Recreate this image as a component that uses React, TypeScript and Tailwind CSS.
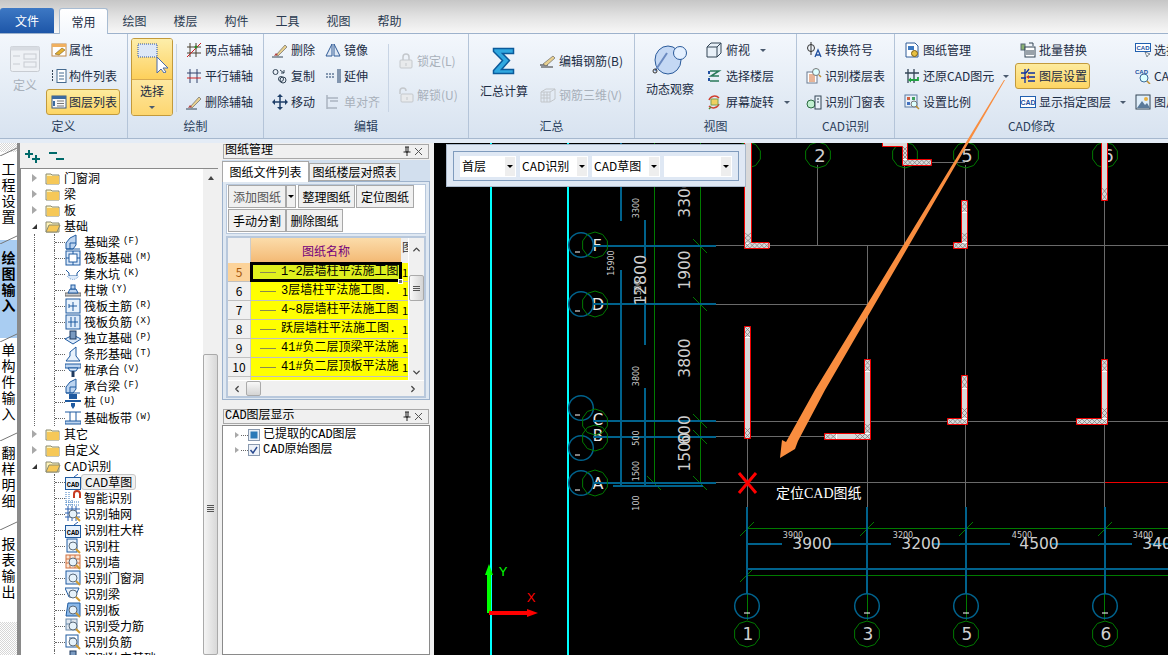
import React from "react";
import { ChevronUp, ChevronDown, ChevronLeft, ChevronRight } from "lucide-react";

const CJK = { fontFamily: '"Noto Sans CJK SC", sans-serif' };
const MONO = { fontFamily: '"Liberation Mono", "Noto Sans CJK SC", monospace' };

const S = ({ children, w = 16, h = 16, vb = "0 0 16 16", o = 1 }: { children: React.ReactNode; w?: number; h?: number; vb?: string; o?: number }) => (
  <svg width={w} height={h} viewBox={vb} className="shrink-0" style={{ opacity: o }} fill="none">
    {children}
  </svg>
);

const icons: Record<string, React.ReactNode> = {
  attr: <><rect x="1" y="2" width="14" height="12" fill="#fff" stroke="#c08a4a" /><rect x="1" y="2" width="14" height="3" fill="#f0b060" /><path d="M4 12l7-6 3 2-6 5z" fill="#e3b030" stroke="#7a5a20" strokeWidth=".6" /></>,
  list: <><path d="M1 3h2M1 6h2M1 9h2M1 12h2" stroke="#345" strokeDasharray="1 1" strokeWidth="2" /><rect x="6" y="1.500" width="9" height="13" fill="#fff" stroke="#456a90" /><path d="M8 5h5M8 8h5M8 11h5" stroke="#456a90" /></>,
  layer: <><rect x="1" y="2" width="14" height="12" fill="#f8f8f8" stroke="#3c5a80" /><rect x="1" y="2" width="14" height="3" fill="#3c6aa0" /><path d="M6 7h7M6 9.500h7M6 12h7" stroke="#777" /><path d="M3 7v5" stroke="#3c6aa0" strokeWidth="2" /></>,
  two: <><path d="M4 1v14M10 1v14M1 5h14M1 11h14" stroke="#4a4030" /><path d="M1 15L15 1" stroke="#d02020" /><circle cx="10" cy="5" r="1.500" fill="#2a8a2a" /></>,
  par: <><path d="M4 1v14M11 1v14" stroke="#30406a" /><path d="M1 5h14" stroke="#30406a" /><path d="M1 10h14" stroke="#d02020" /></>,
  erase: <><path d="M0 15h11" stroke="#345" /><path d="M4 13L13 3l2 2-9 9z" fill="#e8d090" stroke="#555" strokeWidth=".6" /><path d="M2 14l2-3 2 2z" fill="#b04040" /></>,
  copy: <><circle cx="3.500" cy="4" r="2.500" stroke="#345" /><circle cx="11" cy="12" r="3" stroke="#345" /><circle cx="9" cy="11" r="2.500" stroke="#345" /><path d="M8 2l4 3M12 2v3h-3" stroke="#345" /></>,
  move: <><path d="M8 1v14M1 8h14" stroke="#1f3f68" strokeWidth="1.500" /><path d="M8 0l3 3H5zM8 16l3-3H5zM0 8l3-3v6zM16 8l-3-3v6z" fill="#1f3f68" /></>,
  mirror: <><path d="M7 2v12H1zM9 2v12h6z" fill="#dfe8f4" stroke="#2f5a96" /></>,
  extend: <><path d="M1 6h9M1 9h9" stroke="#1f3f68" strokeDasharray="2 1" /><path d="M13 1v14M15 1v14" stroke="#1f3f68" /></>,
  align: <><path d="M2 1v14M2 4h11M5 7h8M2 14h10" stroke="#aab4c0" strokeWidth="1.500" /></>,
  lock: <><path d="M5 7V4a3 3 0 016 0v3" stroke="#c4c8cc" strokeWidth="1.500" /><rect x="2" y="7" width="12" height="8" rx="1" fill="#e8eaec" stroke="#c4c8cc" /><path d="M8 10v3" stroke="#c4c8cc" /></>,
  unlock: <><path d="M2 7V4a3 3 0 016 0" stroke="#c4c8cc" strokeWidth="1.500" /><rect x="3" y="7" width="12" height="8" rx="1" fill="#e8eaec" stroke="#c4c8cc" /><path d="M9 10v3" stroke="#c4c8cc" /></>,
  pencil: <><path d="M0 12h8" stroke="#222" /><path d="M3 11L13 3l2 2-9 8z" fill="#e8d090" stroke="#555" strokeWidth=".6" /><path d="M1 14h12" stroke="#333" /></>,
  grid3: <><path d="M1 5l5-3h9v10l-5 3H1zM1 5h9v10M10 5l5-3M4 5v10M7 5v10M1 8h9M1 11h9" stroke="#c2c6ca" /></>,
  cube: <><path d="M1 5l4-4h10v10l-4 4H1z" fill="#e8f0f8" stroke="#345" /><path d="M1 5h10v10M11 5l4-4" stroke="#345" /></>,
  floor: <><path d="M4 3h9L5 8h8M4 13h9" stroke="#2a7a5a" strokeWidth="1.500" /><path d="M3 3v3M3 10v3" stroke="#2050a0" strokeWidth="2" /></>,
  rotate: <><path d="M3 6a6 6 0 0110-2" stroke="#d04030" strokeWidth="1.500" /><path d="M13 10a6 6 0 01-10 2" stroke="#d04030" strokeWidth="1.500" /><rect x="5" y="5" width="7" height="6" fill="#f0d060" stroke="#7aa050" /><path d="M3 15l2-2" stroke="#5a8a30" strokeWidth="1.500" /></>,
  conv: <><circle cx="5" cy="6" r="3.500" stroke="#333" /><path d="M5 0v13" stroke="#333" /><path d="M9 15l3-7 3 7M10 13h4" stroke="#2050a0" strokeWidth="1.300" /></>,
  floorT: <><rect x="1" y="4" width="10" height="11" fill="#fff" stroke="#6a7a90" /><path d="M3 7h6M3 9h6M3 11h6M3 13h6" stroke="#d06a30" /><circle cx="10" cy="4" r="3.500" fill="#dff" stroke="#777" /><path d="M13 7l2 2" stroke="#c09030" strokeWidth="1.500" /></>,
  door: <><circle cx="5" cy="10" r="4" fill="#c0f0d0" stroke="#2a6a40" /><rect x="9" y="2" width="6" height="13" fill="#e8f0f8" stroke="#345" /><path d="M11 5h2M11 8h2" stroke="#345" /></>,
  mgr: <><path d="M2 1h9l3 3v11H2z" fill="#fff" stroke="#2f5a96" /><rect x="4" y="4" width="6" height="4" fill="#3c78c0" /><circle cx="10.500" cy="11.500" r="3" fill="#e8c040" stroke="#7a5a10" /></>,
  restore: <><path d="M4 1v14M10 1v14M1 5h14" stroke="#345" strokeWidth="1.300" /><path d="M6 12h8v-3" stroke="#20a040" strokeWidth="1.800" /><path d="M4 12l3-2.500v5z" fill="#20a040" /></>,
  scale: <><rect x="1" y="1" width="12" height="12" fill="#e8f0f8" stroke="#5a7aa0" /><rect x="3" y="3" width="3" height="3" fill="#d06040" /><rect x="8" y="3" width="3" height="3" fill="#40a060" /><rect x="3" y="8" width="3" height="3" fill="#4070c0" /><circle cx="10" cy="10" r="3" fill="#dff" stroke="#777" /><path d="M12 12l3 3" stroke="#c09030" strokeWidth="1.500" /></>,
  batch: <><rect x="1" y="2" width="4" height="6" fill="#8ab070" stroke="#567" /><rect x="5" y="5" width="10" height="10" fill="#fff" stroke="#345" /><path d="M7 8v5M9 8v5M11 8v5M13 8v5" stroke="#345" /><path d="M9 1h4v3" stroke="#345" /></>,
  lset: <><path d="M5 1v14M1 5h5M1 10h5" stroke="#1030a0" strokeWidth="1.300" /><path d="M9 1l-3 4M8 5h7M8 9h7M8 13h7" stroke="#1030a0" strokeWidth="1.300" /><path d="M6 9l3-2v4z" fill="#d03020" /></>,
  cad: <><rect x="0.500" y="2.500" width="15" height="11" fill="#fff" stroke="#2060b0" /><text x="8" y="11" fontSize="7" textAnchor="middle" fill="#2050a0" fontFamily="Liberation Sans" fontWeight="700">CAD</text></>,
  cadS: <><rect x="0.500" y="1.500" width="15" height="8" fill="#fff" stroke="#2060b0" /><text x="8" y="8" fontSize="6" textAnchor="middle" fill="#2050a0" fontFamily="Liberation Sans" fontWeight="700">CAD</text><path d="M10 10l2 5 1-2 2-1z" fill="#fff" stroke="#345" strokeWidth=".6" /></>,
  cadM: <><text x="0" y="6" fontSize="6" fill="#2050a0" fontFamily="Liberation Sans" fontWeight="700">CAD</text><circle cx="9" cy="10" r="4" fill="#dff" stroke="#3a6a9a" /><path d="M12 13l3 3" stroke="#c09030" strokeWidth="1.500" /></>,
  pic: <><rect x="1" y="1" width="14" height="14" fill="#dfeefa" stroke="#345" /><path d="M2 14l5-7 3 4 2-2 3 5z" fill="#5a7a9a" /><circle cx="11" cy="5" r="2" fill="#e8b040" /></>,
};

function Dd() {
  return <span className="inline-block ml-[6px] w-0 h-0 border-x-[3px] border-x-transparent border-t-[3px] border-t-[#4a5a6e]" />;
}

function Item({ icon, label, hi, dis, dd, gap = 3 }: { icon: string; label: string; hi?: boolean; dis?: boolean; dd?: boolean; gap?: number }) {
  return (
    <div className={`h-[26px] w-fit flex items-center whitespace-nowrap relative ${dis ? "text-[#a8b0ba]" : "text-[#1b2c44]"}`} style={{ gap }}>
      {hi && <span className="absolute -left-[5px] right-[-3px] top-0 bottom-0 rounded-[3px] border border-[#c29a3c] bg-gradient-to-b from-[#fdeb9e] to-[#fdd563]" />}
      <span className="relative flex items-center" style={{ gap }}>
        <S>{icons[icon]}</S>
        <span>{label}</span>
        {dd && <Dd />}
      </span>
    </div>
  );
}

function Group({ w, label, children, last }: { w: number; label: string; children: React.ReactNode; last?: boolean }) {
  return (
    <div className={`h-full flex flex-col shrink-0 ${last ? "" : "border-r border-[#b4c4d8]"}`} style={{ width: w }}>
      <div className="h-[84px] flex pt-[3px] overflow-hidden">{children}</div>
      <div className="flex-1 text-center text-[#2b3f5c] leading-[16px]">{label}</div>
    </div>
  );
}

const Col = ({ children, ml = 0, w }: { children: React.ReactNode; ml?: number; w?: number }) => (
  <div className="flex flex-col shrink-0" style={{ marginLeft: ml, width: w }}>{children}</div>
);

function Ribbon() {
  return (
    <div className="h-[105px] w-full flex text-[12px] bg-gradient-to-b from-[#f3f7fc] to-[#d8e3f0] border-t border-[#9db2cc] shrink-0">
      <Group w={128} label="定义">
        <div className="w-[50px] flex flex-col items-center pt-[9px] text-[#a8b0ba] shrink-0">
          <S w={30} h={26} vb="0 0 30 26"><rect x=".5" y=".5" width="29" height="25" rx="2" fill="#eef1f5" stroke="#c8ccd2" /><rect x=".5" y=".5" width="29" height="4" fill="#d8dce2" /><rect x="14" y="8" width="12" height="5" stroke="#c8ccd2" /><rect x="14" y="16" width="12" height="5" stroke="#c8ccd2" /><path d="M3 10h7M3 18h7" stroke="#c8ccd2" /></S>
          <span className="mt-[4px]">定义</span>
        </div>
        <Col ml={1}>
          <Item icon="attr" label="属性" gap={2} />
          <Item icon="list" label="构件列表" gap={2} />
          <Item icon="layer" label="图层列表" hi gap={2} />
        </Col>
      </Group>
      <Group w={136} label="绘制">
        <div className="ml-[3px] w-[42px] h-[78px] mt-[1px] rounded-[3px] border border-[#c29a3c] flex flex-col shrink-0 overflow-hidden">
          <div className="h-[41px] bg-gradient-to-b from-[#fdeeaa] to-[#fdd05a] border-b border-[#d8aa50] flex items-start justify-start pl-[5px] pt-[4px]">
            <S w={32} h={30} vb="0 0 32 30"><rect x="1" y="1" width="19" height="13" fill="#dde8f8" stroke="#2a50a0" strokeDasharray="1 1" /><path d="M20 14v16l4-4 3 4 2-1-3-4h5z" fill="#fff" stroke="#4a6aa8" /></S>
          </div>
          <div className="flex-1 bg-gradient-to-b from-[#fde8a0] to-[#fdd670] flex flex-col items-center text-[#1b2c44] pt-[2px]">
            <span>选择</span>
            <span className="mt-[6px] w-0 h-0 border-x-[3px] border-x-transparent border-t-[3px] border-t-[#4a5a6e]" />
          </div>
        </div>
        <div className="ml-[3px] mr-[9px] w-px h-[68px] mt-[7px] bg-[#c8d4e4]" />
        <Col>
          <Item icon="two" label="两点辅轴" />
          <Item icon="par" label="平行辅轴" />
          <Item icon="erase" label="删除辅轴" />
        </Col>
      </Group>
      <Group w={205} label="编辑">
        <Col ml={8}>
          <Item icon="erase" label="删除" />
          <Item icon="copy" label="复制" />
          <Item icon="move" label="移动" />
        </Col>
        <Col ml={10}>
          <Item icon="mirror" label="镜像" />
          <Item icon="extend" label="延伸" />
          <Item icon="align" label="单对齐" dis />
        </Col>
        <div className="ml-[8px] w-px h-[68px] mt-[7px] bg-[#c8d4e4]" />
        <div className="ml-[9px] flex flex-col pt-[11px] gap-[8px]">
          <Item icon="lock" label="锁定(L)" dis />
          <Item icon="unlock" label="解锁(U)" dis />
        </div>
      </Group>
      <Group w={166} label="汇总">
        <div className="ml-[10px] w-[50px] flex flex-col items-center pt-[10px] text-[#1b2c44] shrink-0">
          <S w={24} h={28} vb="0 0 24 28"><path d="M1.500 1.500h20v5h-11l7 7-8 9h12v4h-20v-3l9-10-9-9z" fill="#30a8e0" stroke="#0b5a9a" strokeWidth="1.500" /></S>
          <span className="mt-[7px]">汇总计算</span>
        </div>
        <div className="ml-[11px] flex flex-col pt-[11px] gap-[8px]">
          <Item icon="pencil" label="编辑钢筋(B)" />
          <Item icon="grid3" label="钢筋三维(V)" dis />
        </div>
      </Group>
      <Group w={162} label="视图">
        <div className="ml-[10px] w-[50px] flex flex-col items-center pt-[8px] text-[#1b2c44] shrink-0">
          <S w={38} h={30} vb="0 0 38 30"><ellipse cx="17" cy="15" rx="13" ry="14" fill="#c4d8f4" stroke="#2a5a9a" /><circle cx="29" cy="8" r="6.500" fill="#e4f0ff" stroke="#2a5a9a" /><path d="M4 26L16 8" stroke="#6a8ac0" strokeWidth="2" /><circle cx="4" cy="26" r="2" stroke="#333" /></S>
          <span className="mt-[5px]">动态观察</span>
        </div>
        <Col ml={11}>
          <Item icon="cube" label="俯视" gap={4} dd />
          <Item icon="floor" label="选择楼层" gap={4} />
          <Item icon="rotate" label="屏幕旋转" gap={4} dd />
        </Col>
      </Group>
      <Group w={98} label="CAD识别">
        <Col ml={9}>
          <Item icon="conv" label="转换符号" />
          <Item icon="floorT" label="识别楼层表" />
          <Item icon="door" label="识别门窗表" />
        </Col>
      </Group>
      <Group w={273} label="CAD修改" last>
        <Col ml={9} w={116}>
          <Item icon="mgr" label="图纸管理" />
          <Item icon="restore" label="还原CAD图元" dd />
          <Item icon="scale" label="设置比例" />
        </Col>
        <Col w={115}>
          <Item icon="batch" label="批量替换" />
          <Item icon="lset" label="图层设置" hi />
          <Item icon="cad" label="显示指定图层" dd />
        </Col>
        <Col>
          <Item icon="cadS" label="选择" />
          <Item icon="cadM" label="CAD" />
          <Item icon="pic" label="图片" />
        </Col>
      </Group>
    </div>
  );
}

function TopBar() {
  const tabs = ["绘图", "楼层", "构件", "工具", "视图", "帮助"];
  return (
    <div className="h-[33px] shrink-0 flex items-end bg-gradient-to-b from-[#c6c6c6] via-[#e2e2e2] to-[#f7f7f7] text-[12px]">
      <div className="w-[54px] h-[25px] rounded-t-[3px] bg-gradient-to-b from-[#3d78c4] to-[#1d56a8] text-white flex items-center justify-center">文件</div>
      <div className="ml-[5px] w-[49px] h-[26px] -mb-px relative rounded-t-[3px] border border-b-0 border-[#a8bcd2] bg-gradient-to-b from-white to-[#f3f7fc] flex items-center justify-center text-[#1b2c44]">常用</div>
      <div className="flex ml-[1px] text-[#2a3a50]">
        {tabs.map((t) => (
          <div key={t} className="w-[51px] h-[24px] flex items-center justify-center">{t}</div>
        ))}
      </div>
    </div>
  );
}

function SideTabs() {
  const tabs = [
    { t: "工程设置", h: 88, pt: 8, blue: false },
    { t: "绘图输入", h: 98, pt: 9, blue: true },
    { t: "单构件输入", h: 99, pt: 3, blue: false },
    { t: "翻样明细", h: 89, pt: 7, blue: false },
    { t: "报表输出", h: 96, pt: 9, blue: false },
  ];
  return (
    <div className="w-[20px] shrink-0 border-r-[3px] border-[#8a8a8a] pt-[9px] overflow-hidden bg-[repeating-conic-gradient(#d6d6d6_0_25%,#ffffff_0_50%)] bg-[length:2px_2px]">
      {tabs.map((x) => (
        <div key={x.t} className={`relative flex flex-col items-center text-[14px] text-black ${x.blue ? "bg-[#a9cdf2] font-bold" : "bg-white"}`} style={{ height: x.h, paddingTop: x.pt }}>
          <svg width="17" height="9" className="absolute top-[-5px] left-0"><path d="M0 9L17 1" stroke="#777" /></svg>
          {x.t.split("").map((c, i) => <span key={i} className="block h-[16px] leading-[16px]">{c}</span>)}
        </div>
      ))}
    </div>
  );
}

const Folder = ({ open }: { open?: boolean }) => (
  <S w={16} h={14} vb="0 0 16 14">
    <path d="M1 3h5l1 1h7v9H1z" fill="#fff3b8" stroke="#8a8a70" />
    {open ? <path d="M1 13l3-7h11l-3 7z" fill="#f6c858" stroke="#8a8a70" /> : <rect x="2" y="5" width="12" height="8" fill="#f6c858" />}
  </S>
);

const treeShapes: Record<string, React.ReactNode> = {
  beam: <><path d="M1 15V9l4-5 6-3v10l-3 4z" fill="#bcd4f0" stroke="#1f5aa0" /><path d="M5 15V9h6M1 15h14" stroke="#1f5aa0" /></>,
  raft: <><rect x="1" y="1" width="14" height="14" fill="#dceafa" stroke="#1f5aa0" /><rect x="4" y="4" width="8" height="8" fill="#fff" stroke="#1f5aa0" /><path d="M1 8h3M12 8h3M8 1v3M8 12v3" stroke="#1f5aa0" /></>,
  pit: <><path d="M1 4l3 3v3h8V7l3-3" stroke="#1f5aa0" /><path d="M2 10q6 7 12 0" fill="#dceafa" stroke="#6a9ad0" strokeDasharray="1 1" /></>,
  col: <><rect x="0" y="11" width="16" height="3" fill="#c8c8c8" stroke="#666" /><path d="M3 11l2-4h6l2 4z" fill="#bcd4f0" stroke="#1f5aa0" /><rect x="6" y="3" width="4" height="4" fill="#bcd4f0" stroke="#1f5aa0" /></>,
  main: <><rect x="1" y="1" width="14" height="14" fill="#e8f2fc" stroke="#1f5aa0" /><path d="M8 4v9M4 8h8M4 6v4" stroke="#1f5aa0" /></>,
  neg: <><rect x="1" y="1" width="14" height="14" fill="#dceafa" stroke="#1f5aa0" /><path d="M6 3v10M10 3v10M3 8h10" stroke="#1f5aa0" /></>,
  ind: <><path d="M0 9l8-4 8 4-8 5z" fill="#dceafa" stroke="#1f5aa0" /><rect x="5" y="1" width="6" height="8" fill="#7a9ac0" stroke="#1f3a60" /></>,
  strip: <><path d="M1 15l4-5V6l6-5v9l4 5z" fill="#e8f2fc" stroke="#1f5aa0" /></>,
  cap: <><rect x="0" y="2" width="16" height="4" fill="#bcd4f0" stroke="#1f5aa0" /><path d="M3 6h10l-2 3H5z" fill="#dceafa" stroke="#1f5aa0" /><path d="M8 9v6" stroke="#1f3a60" strokeWidth="3" /></>,
  pile: <><rect x="4" y="0" width="8" height="5" fill="#1f5aa0" /><path d="M0 7h16" stroke="#1f5aa0" strokeWidth="2" /><path d="M6 9h4v3l-2 3-2-3z" fill="#1f5aa0" /></>,
  band: <><rect x="0" y="11" width="16" height="3" fill="#bcd4f0" stroke="#1f5aa0" /><path d="M0 2h16M5 2v9M11 2v9" stroke="#1f5aa0" /></>,
  cad: <><path d="M9 3l4-3" stroke="#2a60b0" /><rect x=".5" y="3.500" width="15" height="12" fill="#e8f2fc" stroke="#1f5aa0" /><text x="8" y="13" fontSize="7" textAnchor="middle" fill="#000" fontFamily="Liberation Mono" fontWeight="700">CAD</text></>,
  smart: <><path d="M1 2v13M4 2v13M7 10v5M1 12h14M1 15h14" stroke="#3a7ac0" strokeDasharray="1 1" /><path d="M9 8V4a3 3 0 016 0v4" stroke="#c83a20" strokeWidth="2" /></>,
};

const mag = (base: React.ReactNode) => <>{base}<circle cx="8" cy="8" r="4" fill="#e6f2fa" stroke="#5a6a7a" /><path d="M11 11l4 4" stroke="#d09a30" strokeWidth="2" /></>;
treeShapes.axis = mag(<path d="M3 0v15M7 0v15M11 0v15M0 3h15M0 7h15M0 11h15" stroke="#2a60b0" />);
treeShapes.icol = mag(<rect x="2" y="1" width="10" height="13" fill="#e8f2fc" stroke="#1f5aa0" />);
treeShapes.iwall = mag(<><rect x="1" y="1" width="14" height="13" fill="#fbe6d4" stroke="#d07040" /><path d="M1 5h14M1 9h14M5 1v13M10 1v13" stroke="#d07040" /></>);
treeShapes.idoor = mag(<rect x="1" y="1" width="14" height="13" fill="#dceafa" stroke="#1f5aa0" />);
treeShapes.ibeam = mag(<path d="M0 2h14l-4 9H4z" fill="#e8f2fc" stroke="#1f5aa0" />);
treeShapes.islab = mag(<path d="M3 1h12v13H1z" fill="#8ab8e8" stroke="#1f5aa0" />);
treeShapes.ireb = mag(<><rect x="1" y="1" width="11" height="11" fill="#dfe6ee" stroke="#6a8aaa" /><path d="M6 1v11M1 6h11" stroke="#6a8aaa" /></>);
treeShapes.ineg = mag(<><rect x="1" y="1" width="12" height="12" fill="#fff" stroke="#1f5aa0" /><path d="M4 4h6v6" stroke="#1f5aa0" /></>);

type N = { t: string; k?: string; i?: string; open?: boolean; f?: boolean; sib?: boolean; sel?: boolean };
const tree: N[] = [
  { t: "门窗洞", f: true }, { t: "梁", f: true }, { t: "板", f: true }, { t: "基础", f: true, open: true },
  { t: "基础梁", k: "(F)", i: "beam", sib: true }, { t: "筏板基础", k: "(M)", i: "raft", sib: true }, { t: "集水坑", k: "(K)", i: "pit", sib: true },
  { t: "柱墩", k: "(Y)", i: "col", sib: true }, { t: "筏板主筋", k: "(R)", i: "main", sib: true }, { t: "筏板负筋", k: "(X)", i: "neg", sib: true },
  { t: "独立基础", k: "(P)", i: "ind", sib: true }, { t: "条形基础", k: "(T)", i: "strip", sib: true }, { t: "桩承台", k: "(V)", i: "cap", sib: true },
  { t: "承台梁", k: "(F)", i: "beam", sib: true }, { t: "桩", k: "(U)", i: "pile", sib: true }, { t: "基础板带", k: "(W)", i: "band", sib: true },
  { t: "其它", f: true }, { t: "自定义", f: true }, { t: "CAD识别", f: true, open: true },
  { t: "CAD草图", i: "cad", sel: true }, { t: "智能识别", i: "smart" }, { t: "识别轴网", i: "axis" }, { t: "识别柱大样", i: "cad" },
  { t: "识别柱", i: "icol" }, { t: "识别墙", i: "iwall" }, { t: "识别门窗洞", i: "idoor" }, { t: "识别梁", i: "ibeam" },
  { t: "识别板", i: "islab" }, { t: "识别受力筋", i: "ireb" }, { t: "识别负筋", i: "ineg" }, { t: "识别独立基础", i: "ind" },
];

function TreeRow({ n }: { n: N }) {
  if (n.f) {
    return (
      <div className="h-[16px] flex items-center pl-[11px] shrink-0">
        <span className="w-[13px] flex items-center">
          {n.open
            ? <span className="w-0 h-0 border-l-[5px] border-l-transparent border-b-[5px] border-b-[#333]" />
            : <span className="w-0 h-0 border-y-[4.500px] border-y-transparent border-l-[5px] border-l-[#a8a8a8]" />}
        </span>
        <Folder open={n.open} />
        <span className="ml-[3px]">{n.t}</span>
      </div>
    );
  }
  return (
    <div className="h-[16px] flex items-center shrink-0 relative">
      <span className="ml-[13px] w-[20px] h-full shrink-0">
        {n.sib && <span className="block h-full border-l border-dotted border-[#666]" />}
      </span>
      <span className="w-[11px] h-full shrink-0 border-l border-dotted border-[#666] flex items-center">
        <span className="w-full border-t border-dotted border-[#666]" />
      </span>
      <S>{treeShapes[n.i!]}</S>
      <span className={`pl-[3px] pr-[3px] flex items-center h-[16px] whitespace-nowrap ${n.sel ? "rounded-[3px] border border-[#c8c8c8] bg-[#f0f0f0]" : ""}`}>
        <span>{n.t}</span>
        {n.k && <span className="ml-[3px] text-[9px]" style={MONO}>{n.k}</span>}
      </span>
    </div>
  );
}

function TreePanel() {
  return (
    <div className="w-[198px] shrink-0 flex flex-col text-[12px] text-black">
      <div className="h-[25px] bg-[#f0f0f0] flex items-center pl-[4px] gap-[6px] shrink-0">
        <S w={18} h={14} vb="0 0 18 14"><path d="M5 1v8M1 5h8M12 6v8M8 10h8" stroke="#006a6a" strokeWidth="2" /></S>
        <S w={18} h={14} vb="0 0 18 14"><path d="M1 4h8M8 10h8" stroke="#006a6a" strokeWidth="2" /></S>
      </div>
      <div className="flex-1 bg-white border-t border-l border-[#8a8a8a] flex overflow-hidden">
        <div className="flex-1 flex flex-col pt-[1px] overflow-hidden">
          {tree.map((n, i) => <TreeRow key={i} n={n} />)}
        </div>
        <div className="w-[15px] bg-[#f0f0f0] flex flex-col shrink-0">
          <div className="h-[16px] flex items-center justify-center mt-[1px]"><span className="w-0 h-0 border-x-[3px] border-x-transparent border-b-[4px] border-b-[#444]" /></div>
          <div className="mt-[168px] flex-1 bg-gradient-to-r from-[#f4f4f4] to-[#d8d8d8] border border-[#aaa] rounded-[2px] flex flex-col items-center pt-[150px] gap-[1px]">
            <span className="w-[7px] h-px bg-[#555]" /><span className="w-[7px] h-px bg-[#555]" /><span className="w-[7px] h-px bg-[#555]" /><span className="w-[7px] h-px bg-[#555]" />
          </div>
        </div>
      </div>
    </div>
  );
}

const PanelHead = ({ t }: { t: string }) => (
  <div className="h-[15px] mx-[2px] border border-[#a8a8a8] bg-[#f0f0f0] flex items-center pl-[1px] shrink-0 text-black">
    <span className="flex-1 leading-[13px]" style={MONO}>{t}</span>
    <S w={10} h={11} vb="0 0 10 11"><path d="M3 1h4M4 1v5h2V1M1.500 6h7M5 6v4" stroke="#222" /></S>
    <S w={12} h={9} vb="-1 0 12 9"><path d="M2 1l7 7M9 1l-7 7" stroke="#555" /></S>
    <span className="w-[4px]" />
  </div>
);

const Btn = ({ t, w, c = "text-black" }: { t: string; w: number; c?: string }) => (
  <div className={`h-[23px] border border-[#a8a8a8] bg-[#f0f0f0] flex items-center justify-center shrink-0 ${c}`} style={{ width: w }}>{t}</div>
);

const rows = [
  ["5", "1~2层墙柱平法施工图"], ["6", "3层墙柱平法施工图."], ["7", "4~8层墙柱平法施工图"],
  ["8", "跃层墙柱平法施工图."], ["9", "41#负二层顶梁平法施"], ["10", "41#负二层顶板平法施"], ["", ""],
];

function Grid() {
  return (
    <div className="mx-[4px] mt-[2px] h-[162px] border-2 border-[#b8c8dc] bg-white flex flex-col text-black overflow-hidden" style={CJK}>
      <div className="flex h-[142px]">
        <div className="w-[180px] overflow-hidden flex flex-col">
          <div className="flex h-[25px] shrink-0">
            <div className="w-[23px] bg-[#f0f0f0] border-r border-[#ccc]" />
            <div className="w-[150px] bg-gradient-to-b from-[#fbdcaa] to-[#f3b872] flex items-center justify-center text-[#74007c]">图纸名称</div>
            <div className="w-[7px] bg-[#f0f0f0] overflow-hidden pl-[1px] text-[#333]">图</div>
          </div>
          {rows.map(([n, t], i) => (
            <div key={i} className="flex h-[19px] shrink-0 relative border-b border-[#c0c0c0]">
              <div className={`w-[23px] flex items-center justify-center border-r border-[#ccc] ${i === 0 ? "bg-[#fcd39a] text-[#a8580c]" : "bg-[#f0f0f0]"}`}>{n}</div>
              <div className={`w-[150px] flex items-center overflow-hidden whitespace-nowrap relative ${i === 0 ? "bg-[#dff01e] outline-[3px] outline-black -outline-offset-[2px] z-10" : "bg-[#ffff00]"}`}>
                <span className="ml-[9px] w-[16px] h-px bg-[#8a8a50] shrink-0" />
                <span className="ml-[5px]" style={MONO}>{t}</span>
              </div>
              <div className="w-[7px] bg-[#ffff00] overflow-hidden text-[11px] leading-[18px] pl-[1px]">{n ? "1" : ""}</div>
              {i === 0 && <span className="absolute left-[170px] top-[16px] w-[5px] h-[5px] bg-[#777] border border-white z-20" />}
            </div>
          ))}
        </div>
        <div className="w-[15px] ml-[1px] bg-[#f0f0f0] flex flex-col items-center shrink-0">
          <ChevronUp size={11} strokeWidth={3} className="mt-[6px] text-[#444]" />
          <div className="mt-[20px] w-[15px] h-[26px] border border-[#aaa] bg-gradient-to-r from-[#f8f8f8] to-[#d4d4d4] rounded-[2px] flex flex-col items-center justify-center gap-[1px]">
            <span className="w-[7px] h-px bg-[#555]" /><span className="w-[7px] h-px bg-[#555]" /><span className="w-[7px] h-px bg-[#555]" />
          </div>
          <ChevronDown size={11} strokeWidth={3} className="mt-auto mb-[2px] text-[#444]" />
        </div>
      </div>
      <div className="h-[16px] mt-[1px] bg-[#f0f0f0] flex items-center">
        <ChevronLeft size={10} strokeWidth={3} className="ml-[4px] text-[#444]" />
        <div className="ml-[4px] w-[15px] h-[15px] border border-[#aaa] bg-gradient-to-b from-[#f8f8f8] to-[#d4d4d4] rounded-[2px]" />
        <ChevronRight size={10} strokeWidth={3} className="ml-auto mr-[6px] text-[#444]" />
      </div>
    </div>
  );
}

function DrawingPanel() {
  return (
    <div className="w-[216px] shrink-0 bg-[#f0f0f0] pl-[3px] pr-[3px] pt-[1px] flex flex-col text-[12px]" style={CJK}>
      <PanelHead t="图纸管理" />
      <div className="mt-[1px] mx-[1px] bg-[#d2dfee] flex items-end h-[21px] shrink-0">
        <div className="w-[87px] h-[21px] bg-white border border-b-0 border-[#a8a8a8] flex items-center justify-center text-black relative z-10 -mb-px">图纸文件列表</div>
        <div className="w-[91px] h-[18px] bg-[#f0f0f0] border border-[#a8a8a8] flex items-center justify-center text-black">图纸楼层对照表</div>
      </div>
      <div className="mx-[1px] h-[219px] border border-[#9db2cc] bg-[#dfe8f2] flex flex-col pt-[2px]">
        <div className="mx-[3px] h-[50px] bg-white border border-[#b8c8dc] flex flex-col gap-[1px] pl-[1px] shrink-0">
          <div className="flex">
            <Btn t="添加图纸" w={58} c="text-[#555]" />
            <div className="w-[10px] h-[23px] border border-[#a8a8a8] bg-[#f0f0f0] flex items-center justify-center mr-[2px]"><span className="w-0 h-0 border-x-[3px] border-x-transparent border-t-[3px] border-t-black" /></div>
            <Btn t="整理图纸" w={57} />
            <span className="w-[1px]" />
            <Btn t="定位图纸" w={58} />
          </div>
          <div className="flex">
            <Btn t="手动分割" w={58} />
            <Btn t="删除图纸" w={57} />
          </div>
        </div>
        <div className="-mx-[1px]"><Grid /></div>
      </div>
      <div className="mt-[9px]"><PanelHead t="CAD图层显示" /></div>
      <div className="mx-[1px] mt-[1px] flex-1 bg-white border border-[#8a8a8a] pt-[1px] text-black">
        {[
          ["已提取的CAD图层", "a"],
          ["CAD原始图层", "b"],
        ].map(([t, k]) => (
          <div key={k} className="h-[14px] flex items-center pl-[12px] whitespace-nowrap mt-[1px]">
            <span className="w-0 h-0 border-y-[3.500px] border-y-transparent border-l-[4px] border-l-[#a8a8a8]" />
            <span className="w-[7px] ml-[2px] border-t border-dotted border-[#666]" />
            {k === "a"
              ? <S w={12} h={12} vb="0 0 12 12"><rect x=".5" y=".5" width="11" height="11" fill="#e8f0f8" stroke="#8a9ab0" /><rect x="2.500" y="2.500" width="7" height="7" fill="#2a7ab8" /></S>
              : <S w={12} h={12} vb="0 0 12 12"><rect x=".5" y=".5" width="11" height="11" fill="#eef2f8" stroke="#8a9ab0" /><path d="M2.500 6l2.500 3 4-6" stroke="#2a4a90" strokeWidth="1.500" /></S>}
            <span className="ml-[3px]" style={MONO}>{t}</span>
          </div>
        ))}
      </div>
    </div>
  );
}

const BLUE = "#00628c";
const GREEN = "#007a00";
const GREY = "#6a6a6a";
const TXT = "#cfcfcf";

function Hatch({ x, y, w, h }: { x: number; y: number; w: number; h: number }) {
  const horiz = w > h;
  const cell = horiz ? h : w;
  const n = Math.max(1, Math.round((horiz ? w : h) / cell));
  const d: string[] = [];
  for (let i = 0; i < n; i++) {
    if (horiz) {
      const s = w / n;
      d.push(`M${x + i * s} ${y}L${x + (i + 1) * s} ${y + h}M${x + (i + 1) * s} ${y}L${x + i * s} ${y + h}`);
    } else {
      const s = h / n;
      d.push(`M${x} ${y + i * s}L${x + w} ${y + (i + 1) * s}M${x + w} ${y + i * s}L${x} ${y + (i + 1) * s}`);
    }
  }
  return (
    <g>
      <path d={d.join("")} stroke="#777" strokeWidth=".7" />
      {horiz
        ? <path d={`M${x + w + 0.5} ${y}v${h}`} stroke="#fff" />
        : <path d={`M${x} ${y + h + 0.5}h${w}`} stroke="#fff" />}
    </g>
  );
}

function Wall({ d, hatches }: { d: string; hatches: number[][] }) {
  return (
    <g>
      <path d={d} fill="#d9d9d9" />
      {hatches.map((a, i) => <Hatch key={i} x={a[0]} y={a[1]} w={a[2]} h={a[3]} />)}
      <path d={d} fill="none" stroke="#f00000" strokeWidth="1" />
    </g>
  );
}

function Oct({ x, y, r = 13, c = GREEN }: { x: number; y: number; r?: number; c?: string }) {
  const pts = Array.from({ length: 10 }, (_, i) => {
    const a = (Math.PI * 2 * i) / 10 + Math.PI / 2;
    return `${x + r * Math.cos(a)},${y + r * Math.sin(a)}`;
  }).join(" ");
  return <polygon points={pts} fill="none" stroke={c} strokeWidth="1" />;
}

const BlueC = ({ x, y, left }: { x: number; y: number; left?: boolean }) => (
  <g>
    <circle cx={x} cy={y} r="12.300" fill="none" stroke={BLUE} strokeWidth="1.500" />
    <path d={left ? `M${x - 6} ${y + 7}h5` : `M${x - 3} ${y + 7}h6`} stroke="#fff" strokeWidth="1" />
  </g>
);

const Tx = ({ x, y, t, s = 16, rot, c = TXT }: { x: number; y: number; t: string; s?: number; rot?: boolean; c?: string }) => (
  <text x={x} y={y} fontSize={s} fill={c} textAnchor="middle" dominantBaseline="central" fontFamily="DejaVu Sans" transform={rot ? `rotate(-90 ${x} ${y})` : undefined}>{t}</text>
);

const Tick = ({ x, y, up = true }: { x: number; y: number; up?: boolean }) => (
  <path d={up ? `M${x - 7} ${y + 7}L${x + 7} ${y - 7}` : `M${x - 7} ${y - 7}L${x + 7} ${y + 7}`} stroke={GREEN} strokeWidth="1" />
);

function Drawing() {
  const hLines = [246, 304, 421, 437, 483];
  const bottoms = [747, 867, 966, 1105];
  const labels = ["1", "3", "5", "6"];
  return (
    <svg width="734" height="512" viewBox="434 143 734 512" className="block">
      <path d="M491 143V655M568 143V655" stroke="#00ffff" strokeWidth="2" />
      <g stroke={GREY} strokeWidth="1" fill="none">
        <path d="M716 245.500H1168M716 304.500H867M716 421.500H1168M716 436.500H825M716 482.500H1105" />
        <path d="M747.500 438V510M867.500 246V507M965.500 165V507M1104.500 200V507M817.500 165V245M904.500 165V245M904 162.500H965" />
      </g>
      <path d="M1105 482.500H1168" stroke="#f00000" strokeWidth="1" />
      <g stroke={GREEN} strokeWidth="1" fill="none">
        <path d="M654.500 143V483M700.500 143V483M747 528.500H1168M747 575.500H1168" />
        <path d="M747.500 594V620M867.500 594V620M966.500 594V620M1104.500 594V620" />
      </g>
      {hLines.map((y) => <Tick key={y} x={700} y={y} up={false} />)}
      <Tick x={654} y={483} up={false} />
      {bottoms.map((x) => <g key={x}><Tick x={x} y={529} />{x === 747 && <Tick x={x} y={575} />}</g>)}
      <Tx x={597} y={245} t="F" s={16} c="#e8e8e8" />
      <Tx x={598} y={304} t="D" s={16} c="#e8e8e8" />
      <Tx x={598} y={420} t="C" s={15} c="#e8e8e8" />
      <Tx x={598} y={436} t="B" s={15} c="#e8e8e8" />
      <Tx x={598} y={483} t="A" s={16} c="#e8e8e8" />
      <g stroke={BLUE} strokeWidth="2" fill="none">
        {hLines.map((y) => <path key={y} d={`M593 ${y}H716`} />)}
        <path d="M613 486H703" />
        <path d="M621 143V221M621 270V485M645 220V258M645 305V345M645 388V485" />
        {bottoms.map((x) => <path key={x} d={`M${x} 507V594`} />)}
        <path d="M747 569H1168" />
        <path d="M748 544H782M830 544H891M933 544H1010M1052 544H1132M1150 544H1168" />
      </g>
      <BlueC x={581} y={245} left /><Oct x={595} y={245} />
      <BlueC x={581} y={304} left /><Oct x={595} y={304} />
      <BlueC x={581} y={408} left /><Oct x={595} y={422} />
      <BlueC x={581} y={448} left /><Oct x={595} y={438} />
      <BlueC x={581} y={483} left /><Oct x={595} y={483} />
      {bottoms.map((x, i) => (
        <g key={x}>
          <BlueC x={x} y={606} />
          <Oct x={x} y={634} />
          <Tx x={x + 1} y={634} t={labels[i]} s={17} />
        </g>
      ))}
      <Oct x={748} y={155} /><Oct x={818} y={155} /><Oct x={905} y={155} /><Oct x={966} y={155} /><Oct x={1105} y={155} />
      <Tx x={820} y={155} t="2" s={18} />
      <Tx x={967} y={155} t="5" s={18} />
      <Tx x={1108} y={155} t="6" s={18} />
      <Tx x={685} y={198} t="3300" rot s={15.500} />
      <Tx x={685} y={270} t="1900" rot s={15.500} />
      <Tx x={685} y={358} t="3800" rot s={15.500} />
      <Tx x={685} y={452} t="1500" rot s={15.500} />
      <Tx x={685} y={430} t="600" rot s={15.500} />
      <Tx x={640} y={280} t="12800" rot s={16} />
      <Tx x={636} y={208} t="3300" rot s={8} />
      <Tx x={611} y={263} t="15900" rot s={8} />
      <Tx x={638} y={290} t="1500" rot s={8} />
      <Tx x={636} y={376} t="3800" rot s={8} />
      <Tx x={636} y={438} t="500" rot s={8} />
      <Tx x={636} y={471} t="1500" rot s={8} />
      <Tx x={636} y={503} t="100" rot s={8} />
      {[[793, 812, "3900"], [903, 921, "3200"], [1022, 1039, "4500"], [1143, 1162, "3400"]].map(([a, b, t]) => (
        <g key={t as string}>
          <Tx x={a as number} y={535} t={t as string} s={8} />
          <Tx x={b as number} y={544} t={t as string} s={15.500} />
        </g>
      ))}
      <Wall d="M751.500 143V242.500H769V248.500H744.500V143" hatches={[[745, 233, 6, 10], [745, 243, 24, 5]]} />
      <Wall d="M744.500 326.500H750.500V438.500H744.500Z" hatches={[[745, 327, 5, 10], [745, 428, 5, 10]]} />
      <Wall d="M882.500 143V146.500H902.500V165.500H931.500V159.500H907.500V143" hatches={[[903, 147, 4, 12], [903, 160, 28, 5]]} />
      <Wall d="M967.500 200.500V248.500H953.500V242.500H961.500V200.500Z" hatches={[[962, 201, 5, 11], [962, 233, 5, 9], [954, 243, 13, 5]]} />
      <Wall d="M1101.500 143V200.500H1107.500V143" hatches={[[1102, 188, 5, 12]]} />
      <Wall d="M864.500 359.500H870.500V439.500H824.500V433.500H864.500Z" hatches={[[865, 360, 5, 11], [865, 424, 5, 9], [825, 434, 11, 5], [855, 434, 15, 5]]} />
      <Wall d="M961.500 375.500H967.500V424.500H947.500V418.500H961.500Z" hatches={[[962, 376, 5, 12], [962, 408, 5, 10], [948, 419, 19, 5]]} />
      <Wall d="M1101.500 359.500H1107.500V424.500H1076.500V418.500H1101.500Z" hatches={[[1102, 360, 5, 11], [1102, 408, 5, 10], [1077, 419, 30, 5]]} />
      <path d="M739 473L756 493M756 473L739 493" stroke="#ff0000" strokeWidth="3" />
      <text x="776" y="498" fontSize="14" fill="#fff" fontFamily='"Liberation Serif","Noto Sans CJK SC",serif'>定位CAD图纸</text>
      <path d="M489 613V574" stroke="#00ff00" strokeWidth="4" />
      <path d="M489 564l4 11h-8z" fill="#00ff00" />
      <path d="M489 613H527" stroke="#ff0000" strokeWidth="4" />
      <path d="M538 613l-11-4v8z" fill="#ff0000" />
      <text x="503" y="576" fontSize="13" fill="#00ff00" textAnchor="middle" fontFamily="Liberation Sans" fontWeight="100">Y</text>
      <text x="531" y="602" fontSize="13" fill="#ff0000" textAnchor="middle" fontFamily="Liberation Sans" fontWeight="100">X</text>
    </svg>
  );
}

function Combo({ t, w }: { t: string; w: number }) {
  return (
    <div className="h-[21px] bg-white flex items-center justify-between shrink-0" style={{ width: w }}>
      <span className="pl-[2px] text-black" style={CJK}>{t}</span>
      <span className="w-[10px] h-[19px] bg-[#eeeeee] mr-[1px] flex items-center justify-center"><span className="w-0 h-0 border-x-[3px] border-x-transparent border-t-[3px] border-t-black" /></span>
    </div>
  );
}

function Arrow() {
  return (
    <svg width="1168" height="655" viewBox="0 0 1168 655" className="absolute left-0 top-0 pointer-events-none">
      <polygon points="1004,80 1005,80 825,390 798,441 795,449 780,458 782,440 786,442 815,390" fill="#f98d3f" />
    </svg>
  );
}

export default function App() {
  return (
    <div className="relative w-[1168px] h-[655px] overflow-hidden flex flex-col bg-white" style={CJK}>
      <TopBar />
      <Ribbon />
      <div className="h-[5px] shrink-0 bg-[#e4ecf6] border-t border-[#a6b8ce]" />
      <div className="flex-1 flex min-h-0">
        <SideTabs />
        <TreePanel />
        <DrawingPanel />
        <div className="w-[734px] shrink-0 bg-black relative overflow-hidden">
          <Drawing />
          <div className="absolute left-[12px] top-[1px] w-[300px] h-[43px] bg-[#dfe8f4] border border-[#a9b8ca] p-[6px] text-[12px]">
            <div className="h-[30px] border border-[#7f9bbd] flex items-center gap-[4px] px-[6px]">
              <Combo t="首层" w={56} />
              <Combo t="CAD识别" w={68} />
              <Combo t="CAD草图" w={68} />
              <Combo t="" w={68} />
            </div>
          </div>
        </div>
      </div>
      <Arrow />
    </div>
  );
}
